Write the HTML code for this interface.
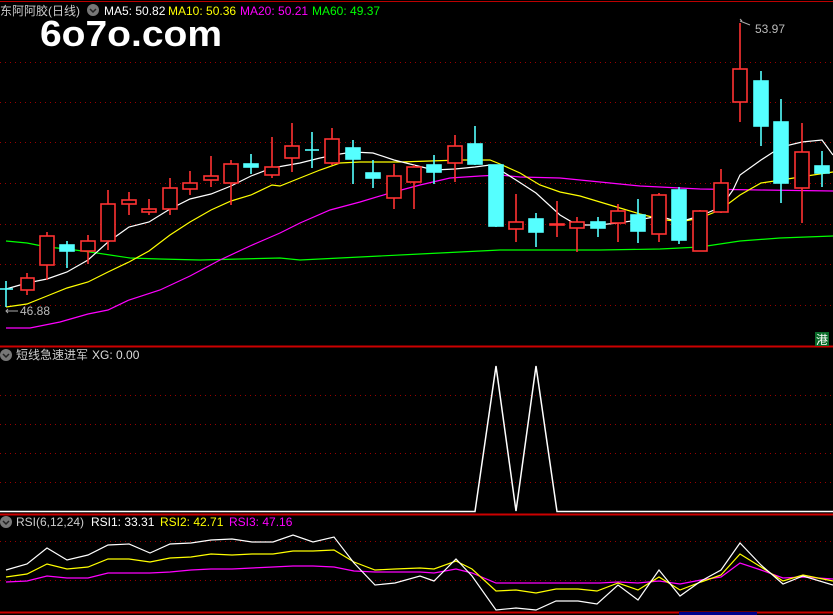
<!DOCTYPE html>
<html><head><meta charset="utf-8"><style>
html,body{margin:0;padding:0;background:#000;width:833px;height:615px;overflow:hidden}
svg{display:block}
text{font-family:"Liberation Sans","Noto Sans CJK SC",sans-serif;font-size:12px}
</style></head><body>
<svg width="833" height="615" viewBox="0 0 833 615" xmlns="http://www.w3.org/2000/svg">
<rect width="833" height="615" fill="#000"/>
<line x1="0" y1="1.5" x2="833" y2="1.5" stroke="#b00" stroke-width="1"/>
<g stroke="#900" stroke-dasharray="1,4" stroke-width="1">
<line x1="0" y1="62.5" x2="833" y2="62.5"/><line x1="0" y1="102.5" x2="833" y2="102.5"/>
<line x1="0" y1="142.5" x2="833" y2="142.5"/><line x1="0" y1="183.5" x2="833" y2="183.5"/>
<line x1="0" y1="224.5" x2="833" y2="224.5"/><line x1="0" y1="264.5" x2="833" y2="264.5"/>
<line x1="0" y1="305.5" x2="833" y2="305.5"/>
<line x1="0" y1="395.5" x2="833" y2="395.5"/><line x1="0" y1="424.5" x2="833" y2="424.5"/>
<line x1="0" y1="453.5" x2="833" y2="453.5"/><line x1="0" y1="482.5" x2="833" y2="482.5"/>
<line x1="0" y1="541.5" x2="833" y2="541.5"/><line x1="0" y1="580.5" x2="833" y2="580.5"/>
</g>
<line x1="0" y1="346.5" x2="833" y2="346.5" stroke="#c00" stroke-width="2"/>
<line x1="0" y1="514.5" x2="833" y2="514.5" stroke="#c00" stroke-width="2"/>
<line x1="0" y1="612.5" x2="833" y2="612.5" stroke="#c00" stroke-width="2"/>

<g fill="none" stroke-width="1.2">
<polyline stroke="#0f0" points="6,241 27,243 47,247 67,249 90,252 110,255 130,258 160,259 200,260 240,259 280,258 300,260 340,258 380,256 420,254 460,252 500,250 560,250 600,250 660,249 700,247 720,244 740,241 780,238 833,236"/>
<polyline stroke="#f0f" points="6,328 30,328 60,322 88,314 108,310 129,300 160,290 190,276 220,260 250,246 280,233 300,223 330,210 360,202 390,193 420,185 450,178 480,176 500,175 520,177 560,178 600,182 640,186 680,188 700,189 760,190 833,191"/>
<polyline stroke="#ff0" points="6,307 27,304 47,296 67,288 88,282 108,272 129,262 149,251 170,235 190,222 211,210 231,201 251,195 272,185 280,186 300,178 320,170 340,163 360,162 400,162 430,161 460,160 490,160 500,164 520,173 540,185 560,192 580,196 600,202 620,208 640,214 660,219 680,222 700,218 720,210 740,195 761,183 781,180 800,177 833,172"/>
<polyline stroke="#fff" points="6,289 27,283 47,279 67,272 88,260 108,242 129,227 149,222 170,209 190,199 211,194 231,186 251,176 272,168 300,163 320,158 340,154 353,152 373,153 394,160 414,165 434,170 455,169 475,167 490,165 500,170 516,180 536,193 560,215 577,225 598,225 618,223 638,220 659,216 679,222 700,216 721,207 733,190 740,175 761,160 781,147 802,142 822,140 833,155"/>
</g>

<g stroke-width="1.6">
<g stroke="#f33" fill="#000">
<line x1="27" y1="273" x2="27" y2="295"/><rect x="21" y="278" width="13" height="12"/>
<line x1="47" y1="232" x2="47" y2="280"/><rect x="40" y="236" width="14" height="29"/>
<line x1="88" y1="235" x2="88" y2="264"/><rect x="81" y="241" width="14" height="10"/>
<line x1="108" y1="190" x2="108" y2="250"/><rect x="101" y="204" width="14" height="37"/>
<line x1="129" y1="192" x2="129" y2="215"/><rect x="122" y="200" width="14" height="4"/>
<line x1="149" y1="199" x2="149" y2="215"/><rect x="142" y="209" width="14" height="3"/>
<line x1="170" y1="178" x2="170" y2="215"/><rect x="163" y="188" width="14" height="21"/>
<line x1="190" y1="171" x2="190" y2="195"/><rect x="183" y="183" width="14" height="6"/>
<line x1="211" y1="156" x2="211" y2="187"/><rect x="204" y="176" width="14" height="4"/>
<line x1="231" y1="160" x2="231" y2="205"/><rect x="224" y="164" width="14" height="19"/>
<line x1="272" y1="137" x2="272" y2="178"/><rect x="265" y="167" width="14" height="8"/>
<line x1="292" y1="123" x2="292" y2="172"/><rect x="285" y="146" width="14" height="12"/>
<line x1="332" y1="128" x2="332" y2="165"/><rect x="325" y="139" width="14" height="24"/>
<line x1="394" y1="164" x2="394" y2="209"/><rect x="387" y="176" width="14" height="22"/>
<line x1="414" y1="165" x2="414" y2="209"/><rect x="407" y="167" width="14" height="15"/>
<line x1="455" y1="135" x2="455" y2="182"/><rect x="448" y="146" width="14" height="17"/>
<line x1="516" y1="194" x2="516" y2="242"/><rect x="509" y="222" width="14" height="7"/>
<line x1="557" y1="201" x2="557" y2="237"/><rect x="550" y="224" width="14" height="1"/>
<line x1="577" y1="217" x2="577" y2="252"/><rect x="570" y="222" width="14" height="6"/>
<line x1="618" y1="204" x2="618" y2="242"/><rect x="611" y="211" width="14" height="12"/>
<line x1="659" y1="193" x2="659" y2="242"/><rect x="652" y="195" width="14" height="39"/>
<line x1="700" y1="210" x2="700" y2="251"/><rect x="693" y="211" width="14" height="40"/>
<line x1="721" y1="169" x2="721" y2="213"/><rect x="714" y="183" width="14" height="29"/>
<line x1="740" y1="23" x2="740" y2="122"/><rect x="733" y="69" width="14" height="33"/>
<line x1="802" y1="123" x2="802" y2="223"/><rect x="795" y="152" width="14" height="36"/>
</g>
<g stroke="#5ff" fill="#5ff">
<line x1="6" y1="281" x2="6" y2="307"/><line x1="0" y1="289" x2="13" y2="289"/>
<line x1="67" y1="241" x2="67" y2="268"/><rect x="60" y="245" width="14" height="6"/>
<line x1="251" y1="154" x2="251" y2="174"/><rect x="244" y="164" width="14" height="3"/>
<line x1="312" y1="132" x2="312" y2="168"/><line x1="305" y1="150" x2="319" y2="150"/>
<line x1="353" y1="140" x2="353" y2="184"/><rect x="346" y="148" width="14" height="11"/>
<line x1="373" y1="160" x2="373" y2="188"/><rect x="366" y="173" width="14" height="5"/>
<line x1="434" y1="155" x2="434" y2="184"/><rect x="427" y="165" width="14" height="7"/>
<line x1="475" y1="126" x2="475" y2="165"/><rect x="468" y="144" width="14" height="20"/>
<line x1="496" y1="165" x2="496" y2="227"/><rect x="489" y="165" width="14" height="61"/>
<line x1="536" y1="213" x2="536" y2="247"/><rect x="529" y="219" width="14" height="13"/>
<line x1="598" y1="217" x2="598" y2="237"/><rect x="591" y="222" width="14" height="6"/>
<line x1="638" y1="199" x2="638" y2="243"/><rect x="631" y="215" width="14" height="16"/>
<line x1="679" y1="187" x2="679" y2="244"/><rect x="672" y="190" width="14" height="50"/>
<line x1="761" y1="71" x2="761" y2="146"/><rect x="754" y="81" width="14" height="45"/>
<line x1="781" y1="99" x2="781" y2="203"/><rect x="774" y="122" width="14" height="61"/>
<line x1="822" y1="151" x2="822" y2="187"/><rect x="815" y="166" width="14" height="7"/>
</g>
</g>

<path d="M742,21 l-2,-2 M740,21 l10,4 M8,309 l-2,2 l2,2 M6,311 l12,0" stroke="#aaa" fill="none"/>
<text x="755" y="33" fill="#bbb">53.97</text>
<text x="20" y="315" fill="#bbb">46.88</text>
<rect x="815" y="332" width="14" height="14" fill="#0a6b2a"/>
<text x="816" y="344" fill="#fff">港</text>

<text x="0" y="15" fill="#ccc">东阿阿胶(日线)</text>
<circle cx="93" cy="10" r="6" fill="#777"/><path d="M90,9 l3,3 l3,-3" stroke="#222" fill="none" stroke-width="1.5"/>
<text x="104" y="15" fill="#fff">MA5: 50.82</text>
<text x="168" y="15" fill="#ff0">MA10: 50.36</text>
<text x="240" y="15" fill="#f0f">MA20: 50.21</text>
<text x="312" y="15" fill="#0f0">MA60: 49.37</text>
<text x="40" y="46" fill="#fff" style="font-size:36px;font-weight:bold" textLength="182" lengthAdjust="spacingAndGlyphs">6o7o.com</text>

<circle cx="6" cy="355" r="6" fill="#777"/><path d="M3,354 l3,3 l3,-3" stroke="#222" fill="none" stroke-width="1.5"/>
<text x="16" y="359" fill="#ccc">短线急速进军</text>
<text x="92" y="359" fill="#ddd">XG: 0.00</text>
<polyline fill="none" stroke="#fff" stroke-width="1.5" points="0,511.5 475,511.5 496,366 516,511 536,366 557,511.5 833,511.5"/>

<circle cx="6" cy="522" r="6" fill="#777"/><path d="M3,521 l3,3 l3,-3" stroke="#222" fill="none" stroke-width="1.5"/>
<text x="16" y="526" fill="#ccc">RSI(6,12,24)</text>
<text x="91" y="526" fill="#fff">RSI1: 33.31</text>
<text x="160" y="526" fill="#ff0">RSI2: 42.71</text>
<text x="229" y="526" fill="#f0f">RSI3: 47.16</text>
<g fill="none" stroke-width="1.2">
<polyline stroke="#f0f" points="6,582 27,581 47,576 67,578 88,578 108,573 129,573 150,573 170,572 191,570 211,569 232,569 252,568 273,567 293,566 313,566 334,567 354,571 375,572 395,572 420,572 434,573 456,569 472,573 496,583 600,583 618,582 638,583 659,581 680,584 701,580 721,577 740,563 761,570 783,578 803,577 833,579"/>
<polyline stroke="#ff0" points="6,577 27,574 47,564 67,569 88,567 108,559 129,559 150,562 170,558 191,557 211,554 232,555 252,554 273,554 293,551 313,551 334,550 354,562 375,570 395,569 420,568 434,569 456,561 472,569 496,591 516,590 536,593 556,589 578,589 597,591 618,583 638,590 659,577 680,590 701,582 721,575 740,554 761,567 783,581 803,575 833,581"/>
<polyline stroke="#fff" points="6,570 27,564 47,548 67,560 88,555 108,545 129,544 150,553 170,544 191,543 211,540 232,539 252,542 273,542 293,535 313,542 334,537 354,563 375,585 395,583 420,576 434,581 456,559 472,576 496,610 516,608 536,610 556,601 578,601 597,604 618,585 638,600 659,570 680,596 701,581 721,570 740,543 761,565 783,584 803,576 833,585"/>
</g>
<rect x="679" y="612" width="78" height="3" fill="#00008b"/>
</svg>
</body></html>
